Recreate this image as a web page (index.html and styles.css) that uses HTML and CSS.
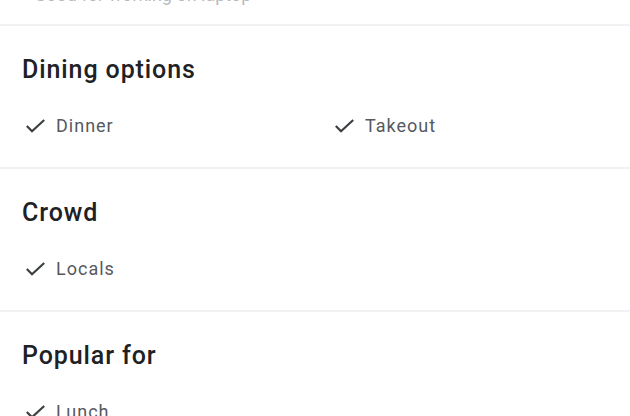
FILE: index.html
```html
<!DOCTYPE html>
<html lang="en">
<head>
<meta charset="utf-8">
<title>Attributes</title>
<link rel="stylesheet" href="styles.css">
</head>
<body>
<div class="page">
  <section class="prev">
    <div class="prev-text">Good for working on laptop</div>
  </section>

  <section class="section">
    <h2 class="title">Dining options</h2>
    <ul class="items">
      <li class="item"><svg class="check" viewBox="0 0 24 24"><polyline points="4.6,12.8 9,17.2 20.4,6.8"/></svg><span>Dinner</span></li>
      <li class="item"><svg class="check" viewBox="0 0 24 24"><polyline points="4.6,12.8 9,17.2 20.4,6.8"/></svg><span>Takeout</span></li>
    </ul>
  </section>

  <section class="section">
    <h2 class="title">Crowd</h2>
    <ul class="items">
      <li class="item"><svg class="check" viewBox="0 0 24 24"><polyline points="4.6,12.8 9,17.2 20.4,6.8"/></svg><span>Locals</span></li>
    </ul>
  </section>

  <section class="section">
    <h2 class="title">Popular for</h2>
    <ul class="items">
      <li class="item"><svg class="check" viewBox="0 0 24 24"><polyline points="4.6,12.8 9,17.2 20.4,6.8"/></svg><span>Lunch</span></li>
    </ul>
  </section>
</div>
</body>
</html>
```

FILE: styles.css
```css
html, body {
  margin: 0;
  padding: 0;
  background: #ffffff;
  overflow: hidden;
}

body {
  font-family: Roboto, "Liberation Sans", Arial, sans-serif;
  color: #202124;
}

.page {
  width: 630px;
  height: 416px;
  overflow: hidden;
}

.prev {
  height: 24px;
  overflow: hidden;
  padding-left: 34px;
}

.prev-text {
  margin-top: -17px;
  font-size: 18px;
  line-height: 24px;
  color: #b8babd;
}

.section {
  border-top: 2px solid #f1f2f3;
  padding: 28px 0 29px 22px;
}

.title {
  margin: 0;
  font-size: 25px;
  line-height: 32px;
  font-weight: 500;
  letter-spacing: 0.9px;
  color: #202124;
}

.items {
  list-style: none;
  margin: 28px 0 0;
  padding: 0;
  display: grid;
  grid-template-columns: 309px 1fr;
}

.item {
  display: flex;
  align-items: center;
  gap: 10px;
  font-size: 18px;
  line-height: 24px;
  letter-spacing: 1px;
  color: #55595e;
}

.check {
  width: 24px;
  height: 24px;
  flex: none;
  margin-left: 1px;
  margin-right: -1px;
}

.check polyline {
  fill: none;
  stroke: #3c4043;
  stroke-width: 2.2;
  stroke-linecap: square;
  stroke-linejoin: miter;
}
```
